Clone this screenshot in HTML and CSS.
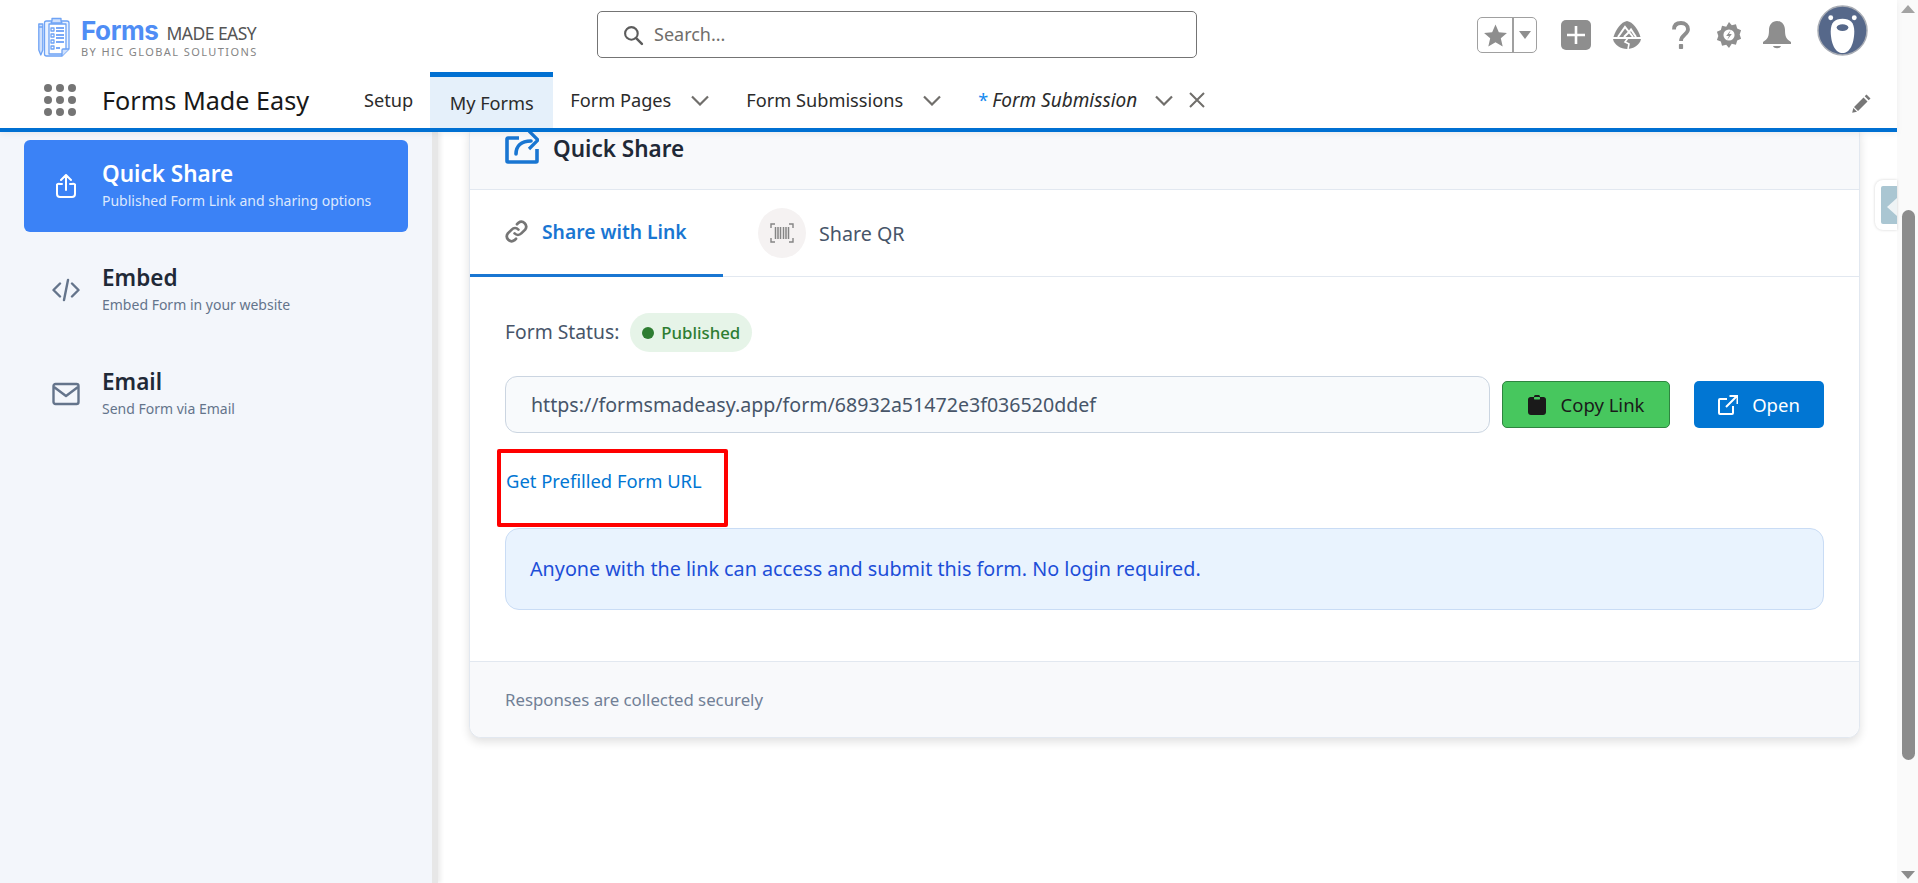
FILE: index.html
```html
<!DOCTYPE html>
<html lang="en">
<head>
<meta charset="utf-8">
<title>Forms Made Easy</title>
<link rel="stylesheet" href="styles.css">
</head>
<body>
<div class="page">
  <div class="app">
    <header class="top">
      <div class="utility">
        <div class="logo">
          <svg class="logo-mark" viewBox="0 0 32 40" fill="none" stroke="#6ea3f5" stroke-width="1.300" stroke-linejoin="round">
            <path d="M8.500 4h20.500a2 2 0 0 1 2 2v26l-7 7H8.500a2 2 0 0 1-2-2V6a2 2 0 0 1 2-2z" fill="#eaf2ff"/>
            <path d="M11 7h17v27l-4 3H11z" fill="#fff"/>
            <path d="M14 4V1.500h9V4l1 2H13z" fill="#cfe0fc"/>
            <path d="M.8 7h4v26l-2 5-2-5zM.8 10h4" fill="#cfe0fc"/>
            <path d="M13 11h3v3h-3zM13 17h3v3h-3zM13 23h3v3h-3zM13 29h3v3h-3z"/>
            <path d="M18 11h8M18 14h8M18 18h8M18 21h8M18 25h8M18 31h4" stroke="#4f8df5"/>
            <path d="M24 39v-6a1 1 0 0 1 1-1h6" fill="#cfe0fc"/>
          </svg>
          <div class="logo-text">
            <div class="logo-line"><span class="logo-forms">Forms</span><span class="logo-made">MADE EASY</span></div>
            <div class="logo-by">BY HIC GLOBAL SOLUTIONS</div>
          </div>
        </div>
        <div class="search">
          <svg class="search-icon" viewBox="0 0 20 20" fill="none" stroke="#5c5c5c" stroke-width="2"><circle cx="8" cy="8" r="6"/><path d="M12.500 12.500 18 18" stroke-linecap="round" stroke-width="2.400"/></svg>
          <span>Search...</span>
        </div>
        <div class="tools">
          <div class="fav">
            <span class="fav-star"><svg viewBox="0 0 24 24" fill="#8e8e8e"><path d="M12 1.500l3.200 7.300 7.800.7-5.900 5.200 1.800 7.800L12 18.400l-6.900 4.100 1.800-7.800L1 9.500l7.800-.7z"/></svg></span>
            <span class="fav-drop"><svg viewBox="0 0 14 10" fill="#8e8e8e"><path d="M1 1h12L7 9z"/></svg></span>
          </div>
          <svg class="tool-plus" viewBox="0 0 30 30"><rect width="30" height="30" rx="5" fill="#8e8e8e"/><path d="M15 6v18M6 15h18" stroke="#fff" stroke-width="2.600"/></svg>
          <svg class="tool-trail" viewBox="0 0 28 28"><path d="M14 0c6 1 11 8 13.500 16H.5C3 8 8 1 14 0z" fill="#8e8e8e"/><path d="M5 16l7-10 4 5 2-2.500 5 7.500M11 16l5-5 4 5" fill="none" stroke="#fff" stroke-width="2"/><path d="M0 18h28c-1 6-8 10-14 10S1 24 0 18z" fill="#8e8e8e"/><path d="M15 17l-3 4 4 2-1 5" fill="none" stroke="#fff" stroke-width="1.600"/></svg>
          <svg class="tool-help" viewBox="0 0 18 28" fill="none"><path d="M2 8.500C2 4 5 2 9 2s7 2.300 7 6.300C16 13.500 9 13.500 9 20" stroke="#8e8e8e" stroke-width="3.800"/><rect x="6.900" y="23" width="4.200" height="5" rx=".8" fill="#8e8e8e"/></svg>
          <svg class="tool-gear" viewBox="0 0 28 28"><path d="M14 0l3 3.500 4.500-1 1.300 4.500 4.200 2-1.500 4.500 1.500 4.500-4.200 2-1.300 4.500-4.500-1L14 28l-3-3.500-4.500 1-1.300-4.500L1 19.500 2.500 15 1 10.500l4.200-2 1.300-4.500 4.500 1z" fill="#8e8e8e"/><circle cx="14" cy="14" r="6" fill="#fff"/><path d="M16 8.500l-5 6.500h3l-2 4.500 5-6.500h-3z" fill="#8e8e8e"/></svg>
          <svg class="tool-bell" viewBox="0 0 28 28" fill="#8e8e8e"><path d="M14 0c5 0 8 4 8 9 0 6 1 9 6 12v2H0v-2c5-3 6-6 6-12 0-5 3-9 8-9z"/><path d="M10 25h8c-1 3-7 3-8 0z"/></svg>
          <svg class="avatar" viewBox="0 0 52 52"><circle cx="26" cy="26" r="25" fill="#56688a" stroke="#a9adb5" stroke-width="1.500"/><path d="M26 14c8 0 12 4 12 13s-3 22-12 22-12-13-12-22 4-13 12-13z" fill="#fff"/><circle cx="14" cy="13" r="2.500" fill="#fff"/><circle cx="38" cy="13" r="2.500" fill="#fff"/><ellipse cx="26" cy="23" rx="6" ry="3.400" fill="#56688a"/></svg>
        </div>
      </div>
      <nav class="nav">
        <svg class="launcher" viewBox="0 0 32 32" fill="#757575"><circle cx="4" cy="4" r="4"/><circle cx="16" cy="4" r="4"/><circle cx="28" cy="4" r="4"/><circle cx="4" cy="16" r="4"/><circle cx="16" cy="16" r="4"/><circle cx="28" cy="16" r="4"/><circle cx="4" cy="28" r="4"/><circle cx="16" cy="28" r="4"/><circle cx="28" cy="28" r="4"/></svg>
        <span class="app-name">Forms Made Easy</span>
        <a class="tab tab-setup">Setup</a>
        <a class="tab tab-current">My Forms</a>
        <a class="tab tab-pages">Form Pages<svg class="chev" viewBox="0 0 18 11"><path d="M1 1.500l8 8 8-8"/></svg></a>
        <a class="tab tab-subs">Form Submissions<svg class="chev" viewBox="0 0 18 11"><path d="M1 1.500l8 8 8-8"/></svg></a>
        <a class="tab tab-open"><span class="asterisk">*</span><em>Form Submission</em><svg class="chev" viewBox="0 0 18 11"><path d="M1 1.500l8 8 8-8"/></svg><svg class="close" viewBox="0 0 16 16"><path d="M1 1l14 14M15 1 1 15"/></svg></a>
        <svg class="pencil" viewBox="0 0 20 20" fill="#777"><path d="M14.500 1.500l4 4-1.800 1.800-4-4zM11.500 4.500l4 4L6 18l-4-4zM1.300 15l3.700 3.700-4.800 1.100z"/></svg>
      </nav>
    </header>
    <div class="body">
      <aside class="side">
        <div class="item item-active">
          <svg class="item-icon" viewBox="0 0 28 24" fill="none" stroke="#fff" stroke-width="2" stroke-linecap="round" stroke-linejoin="round"><path d="M10 10H8a3 3 0 0 0-3 .5V20a3 3 0 0 0 3 3h12a3 3 0 0 0 3-3v-9.500a3 3 0 0 0-3-.5h-2M14 16V1.500M9 6l5-5 5 5"/></svg>
          <div class="item-text"><div class="item-title">Quick Share</div><div class="item-sub">Published Form Link and sharing options</div></div>
        </div>
        <div class="item">
          <svg class="item-icon" viewBox="0 0 28 24" fill="none" stroke="#64748b" stroke-width="2.400" stroke-linecap="round" stroke-linejoin="round"><path d="M8 5.500 1.500 12 8 18.500M20 5.500l6.500 6.500-6.500 6.500M16 2l-4 20"/></svg>
          <div class="item-text"><div class="item-title">Embed</div><div class="item-sub">Embed Form in your website</div></div>
        </div>
        <div class="item">
          <svg class="item-icon" viewBox="0 0 28 24" fill="none" stroke="#64748b" stroke-width="2.400" stroke-linejoin="round"><rect x="1.500" y="2" width="25" height="20" rx="2"/><path d="M2 5l12 9 12-9"/></svg>
          <div class="item-text"><div class="item-title">Email</div><div class="item-sub">Send Form via Email</div></div>
        </div>
      </aside>
      <main class="main">
        <section class="card">
          <div class="card-head">
            <svg class="head-icon" viewBox="0 0 34 34" fill="none" stroke="#1976d2" stroke-width="3.600"><path d="M14 8H3a1 1 0 0 0-1 1v22a1 1 0 0 0 1 1h28a1 1 0 0 0 1-1V19"/><path d="M11 24c0-8 5-13 15-13" stroke-linecap="round"/><path d="M24 1l9 9-9 9" stroke-width="3.200"/></svg>
            <h2>Quick Share</h2>
          </div>
          <div class="tabs">
            <div class="ctab ctab-active">
              <svg class="link-icon" viewBox="0 0 24 24" fill="none" stroke="#757575" stroke-width="2.800" stroke-linecap="round"><path d="M10 14a5 5 0 0 0 7 0l4-4a5 5 0 0 0-7-7l-1.500 1.500"/><path d="M14 10a5 5 0 0 0-7 0l-4 4a5 5 0 0 0 7 7l1.500-1.500"/></svg>
              <span>Share with Link</span>
            </div>
            <div class="ctab ctab-qr">
              <span class="qr-circle"><svg viewBox="0 0 24 20" fill="none" stroke="#858585" stroke-width="1.400"><path d="M1 5V1h4M19 1h4v4M23 15v4h-4M5 19H1v-4"/><path d="M5.500 4v12M8 4v12M10.500 4v12M13.500 4v12M16 4v12M18.500 4v12" stroke-width="1.500"/></svg></span>
              <span>Share QR</span>
            </div>
          </div>
          <div class="card-body">
            <div class="status"><span class="status-label">Form Status:</span><span class="pill"><i class="dot"></i>Published</span></div>
            <div class="url-row">
              <div class="url">https://formsmadeasy.app/form/68932a51472e3f036520ddef</div>
              <button class="btn btn-copy"><svg viewBox="0 0 18 20" fill="#1a1a1a"><path d="M6 1.500C6 .7 6.700 0 7.500 0h3c.8 0 1.500.7 1.500 1.500V2h3.500c1.400 0 2.500 1.100 2.500 2.500V17c0 1.700-1.300 3-3 3H3c-1.700 0-3-1.300-3-3V4.500C0 3.100 1.100 2 2.500 2H6z"/><rect x="6" y="2" width="6" height="2.400" rx=".6" fill="#47c75e"/></svg>Copy Link</button>
              <button class="btn btn-open"><svg viewBox="0 0 20 20" fill="none" stroke="#fff" stroke-width="2"><path d="M9 4H2a1 1 0 0 0-1 1v13a1 1 0 0 0 1 1h12a1 1 0 0 0 1-1v-7"/><path d="M8 12 18.500 1.500M11.500 1h8v8"/></svg>Open</button>
            </div>
            <div class="prefill">
              <a class="prefill-link">Get Prefilled Form URL</a>
              <div class="highlight"></div>
            </div>
            <div class="notice">Anyone with the link can access and submit this form. No login required.</div>
          </div>
          <div class="card-foot">Responses are collected securely</div>
        </section>
      </main>
    </div>
    <div class="dock"><span class="dock-inner"><i></i></span></div>
  </div>
  <div class="scrollbar">
    <i class="arrow arrow-up"></i>
    <div class="track"><div class="thumb"></div></div>
    <i class="arrow arrow-down"></i>
  </div>
</div>
</body>
</html>
```
FILE: styles.css
```css
* { box-sizing: border-box; }
html, body { margin: 0; height: 100%; overflow: hidden; }
body { font-family: "Noto Sans", "Open Sans", sans-serif; color: #181818; background: #fff; }
svg { display: block; flex: none; }

.page { display: flex; width: 1918px; height: 883px; }
.app { position: relative; flex: 1; display: flex; flex-direction: column; min-width: 0; }

.top { position: relative; z-index: 2; flex: none; height: 132px; background: #fff; border-bottom: 4px solid #0070d2; box-shadow: 0 2px 6px rgba(0,0,0,.06); }
.utility { display: flex; align-items: center; height: 72px; padding-left: 38px; }
.logo { display: flex; align-items: center; gap: 11px; width: 559px; margin-top: 2px; }
.logo-mark { width: 32px; height: 40px; }
.logo-text { display: flex; flex-direction: column; }
.logo-line { display: flex; align-items: baseline; gap: 8px; line-height: 24px; padding-top: 2px; }
.logo-forms { font-family: "Inter", sans-serif; font-size: 26px; font-weight: 700; color: #4f8df5; letter-spacing: -.4px; }
.logo-made { font-size: 17.500px; color: #555; letter-spacing: -.55px; }
.logo-by { font-size: 11px; color: #858585; letter-spacing: 1.420px; line-height: 13px; }

.search { display: flex; align-items: center; gap: 10px; width: 600px; height: 47px; margin-top: -4px; padding-left: 25px; border: 1px solid #747474; border-radius: 5px; font-size: 18px; color: #706e6b; }
.search-icon { width: 21px; height: 21px; margin-top: 3px; }

.tools { display: flex; align-items: center; margin-left: 280px; margin-top: -2px; }
.fav { display: flex; width: 60px; height: 36px; border: 1px solid #a0a0a0; border-radius: 5px; }
.fav-star { display: flex; align-items: center; justify-content: center; width: 36px; border-right: 2px solid #a0a0a0; }
.fav-star svg { width: 25px; height: 25px; }
.fav-drop { display: flex; align-items: center; justify-content: center; flex: 1; }
.fav-drop svg { width: 14px; height: 10px; }
.tool-plus { width: 30px; height: 30px; margin-left: 24px; }
.tool-trail { width: 28px; height: 28px; margin-left: 22px; }
.tool-help { width: 18px; height: 28px; margin-left: 31px; }
.tool-gear { width: 26px; height: 28px; margin-left: 26px; }
.tool-bell { width: 28px; height: 28px; margin-left: 21px; }
.avatar { width: 51px; height: 51px; margin-left: 26px; margin-bottom: 9px; }

.nav { display: flex; align-items: center; height: 56px; font-size: 18.200px; padding-left: 44px; }
.launcher { width: 32px; height: 32px; }
.app-name { font-size: 25.200px; margin-left: 26px; width: 253px; white-space: nowrap; color: #181818; }
.tab { display: flex; align-items: center; height: 56px; white-space: nowrap; color: #2b2b2b; }
.tab-setup { margin-left: 9px; padding-right: 17px; }
.tab-current { width: 123px; justify-content: center; background: #e5f0fa; border-top: 5px solid #0070d2; }
.tab-pages { padding-left: 17px; }
.tab-subs { padding-left: 37px; }
.tab-open { padding-left: 37px; }
.tab-open em { margin-left: 4px; font-size: 19px; }
.asterisk { color: #1589ee; }
.chev { width: 18px; height: 11px; margin-left: 20px; fill: none; stroke: #706e6b; stroke-width: 2.200; }
.tab-open .chev { margin-left: 18px; }
.close { width: 16px; height: 16px; margin-left: 16px; fill: none; stroke: #706e6b; stroke-width: 2; }
.pencil { width: 20px; height: 20px; margin-left: auto; margin-right: 25px; margin-top: 6px; }

.body { flex: 1; display: flex; min-height: 0; }
.side { position: relative; z-index: 1; flex: none; width: 432px; padding: 8px 24px 0; background: #f3f6fb; box-shadow: 6px 0 0 #e7e7e7, 9px 0 4px #eeeeee; }
.item { display: flex; align-items: center; height: 92px; margin-bottom: 12px; padding-left: 28px; gap: 22px; border-radius: 6px; }
.item-icon { width: 28px; height: 24px; }
.item-text { padding-bottom: 2px; }
.item-active { background: #3b82f6; color: #fff; }
.item-title { font-size: 22.500px; font-weight: 600; line-height: 30px; margin-bottom: 2px; color: #1f2937; }
.item-sub { font-size: 14px; line-height: 20px; color: #64748b; }
.item-active .item-title { color: #fff; }
.item-active .item-sub { color: #dbe8fe; }

.main { flex: 1; min-width: 0; padding: 0 37px; overflow: hidden; }
.card { margin-top: -9px; margin-bottom: 16px; border: 1px solid #e2e8f0; border-radius: 12px; background: #fff; box-shadow: 0 4px 10px rgba(0,0,0,.12); }
.card-head { display: flex; align-items: center; gap: 14px; height: 66px; padding: 0 35px 16px; background: #f8f9fb; border-bottom: 1px solid #e2e8f0; border-radius: 12px 12px 0 0; }
.head-icon { width: 34px; height: 34px; margin-top: -4px; }
.card-head h2 { margin: 0; font-size: 22.500px; font-weight: 600; color: #1f2937; }
.tabs { display: flex; height: 87px; border-bottom: 1px solid #e2e8f0; }
.ctab { display: flex; align-items: center; font-size: 19.700px; color: #475569; }
.ctab-active { width: 253px; gap: 14px; padding-left: 35px; padding-bottom: 1px; color: #1976d2; font-weight: 600; font-size: 19.300px; border-bottom: 3px solid #1976d2; height: 87px; }
.link-icon { width: 23px; height: 23px; }
.ctab-qr { gap: 13px; margin-left: 35px; }
.qr-circle { display: flex; align-items: center; justify-content: center; width: 48px; height: 50px; border-radius: 50%; background: #f5f2f2; }
.qr-circle svg { width: 24px; height: 20px; }

.card-body { padding: 36px 35px 51px; }
.status { display: flex; align-items: center; gap: 11px; height: 39px; font-size: 19.300px; color: #475569; }
.status-label { padding-bottom: 2px; }
.pill { display: flex; align-items: center; gap: 7px; height: 39px; padding: 0 12px; border-radius: 20px; background: #e6f4e8; font-size: 16.800px; font-weight: 500; color: #2e7d32; }
.dot { width: 12px; height: 12px; border-radius: 50%; background: #2e7d32; }
.url-row { display: flex; align-items: center; margin-top: 24px; }
.url { flex: 1; height: 57px; padding-left: 25px; line-height: 55px; border: 1px solid #cbd5e1; border-radius: 12px; background: #f8fafc; font-size: 19.600px; color: #475569; }
.btn { display: flex; align-items: center; justify-content: center; height: 47px; border-radius: 5px; font: inherit; font-size: 18.500px; }
.btn-copy { gap: 15px; width: 168px; margin-left: 12px; background: #47c75e; border: 1px solid #2e8540; color: #1a1a1a; }
.btn-copy svg { width: 18px; height: 20px; }
.btn-open { gap: 14px; width: 130px; margin-left: 24px; background: #0176d3; border: 0; color: #fff; }
.btn-open svg { width: 20px; height: 20px; }
.prefill { position: relative; height: 95px; padding: 35px 0 0 1px; }
.prefill-link { display: block; font-size: 18.400px; line-height: 26px; color: #0176d3; }
.highlight { position: absolute; left: -8px; top: 16px; width: 231px; height: 78px; border: 4px solid #f00; border-radius: 2px; }
.notice { height: 82px; padding-left: 24px; line-height: 80px; border: 1px solid #c9dcf5; border-radius: 14px; background: #e9f3fe; font-size: 19.750px; color: #1d4ed8; }
.card-foot { height: 76px; padding: 26px 35px 0; border-top: 1px solid #e2e8f0; border-radius: 0 0 12px 12px; background: #f8f9fb; font-size: 16.800px; color: #718096; }

.dock { position: absolute; right: 0; top: 180px; width: 22px; height: 50px; padding: 6px 0 6px 6px; background: #fff; border-radius: 8px 0 0 8px; box-shadow: 0 0 3px rgba(0,0,0,.18); }
.dock-inner { display: block; height: 38px; background: #aac6d2; border-radius: 2px 0 0 2px; position: relative; }
.dock-inner i { position: absolute; right: 0; top: 12px; border: 9px solid transparent; border-left: 0; border-right: 10px solid #eef3f5; }

.scrollbar { flex: none; display: flex; flex-direction: column; align-items: center; width: 21px; background: #fafafa; }
.arrow { flex: none; width: 0; height: 0; border: 7.500px solid transparent; }
.arrow-up { border-top: 0; border-bottom: 8px solid #a3a3a3; margin: 5px 0 0; }
.arrow-down { border-bottom: 0; border-top: 8px solid #8c8c8c; margin: 0 0 4px; }
.track { flex: 1; width: 100%; padding: 197px 3px 0 5px; }
.thumb { height: 550px; border-radius: 7px; background: #8c8c8c; }
```
